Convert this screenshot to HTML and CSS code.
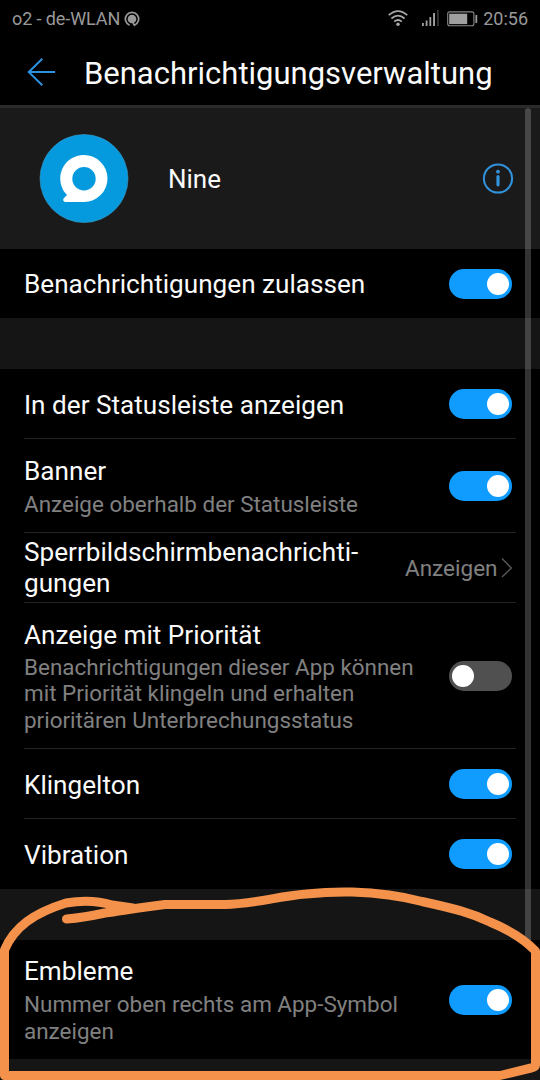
FILE: index.html
```html
<!DOCTYPE html>
<html lang="de">
<head>
<meta charset="utf-8">
<title>Benachrichtigungsverwaltung</title>
<link rel="stylesheet" href="styles.css">
</head>
<body>
<div class="screen">
  <div class="statusbar">
    <span class="carrier">o2 - de-WLAN</span>
    <svg class="ring" width="16" height="16" viewBox="0 0 16 16"><circle cx="8" cy="8" r="4.3" fill="#999"/><path d="M5.6 14.2A6.6 6.6 0 1 1 10.4 14.2L9 12" fill="none" stroke="#999" stroke-width="1.7"/></svg>
    <span class="spacer"></span>
    <svg class="wifi" width="20" height="17" viewBox="0 0 20 17" fill="none" stroke="#a8a8a8" stroke-width="1.7"><path d="M.7 5.2Q10-2.9 19.3 5.2M3.4 8.5Q10 2.8 16.6 8.5M6.2 11.7Q10 8.3 13.8 11.7"/><circle cx="10" cy="14.3" r="1.7" fill="#a8a8a8" stroke="none"/></svg>
    <svg class="signal" width="17" height="17" viewBox="0 0 17 17" fill="#a0a0a0"><path d="M0 14h1.8v3H0zM3.7 11.5h1.8V17H3.7zM7.4 8h1.8v9H7.4zM11.1 4h1.9v13h-1.9z"/><path d="M15 1h1.8v16H15z" fill="#333"/></svg>
    <svg class="battery" width="31" height="16" viewBox="0 0 31 16"><rect x=".7" y=".9" width="26.2" height="13.8" rx="2" fill="none" stroke="#888" stroke-width="1.1"/><path d="M2.2 2.7h18v10.4h-18z" fill="#a0a0a0"/><path d="M28.4 4h1.8v8h-1.8z" fill="#999"/></svg>
    <span class="clock">20:56</span>
  </div>
  <div class="titlebar">
    <svg class="back" width="30" height="30" viewBox="0 0 30 30" fill="none" stroke="#2c92e0" stroke-width="2"><path d="M15.300 1.800 1.800 15.100 15.300 28.300M1.800 15.100H28"/></svg>
    <h1 class="title">Benachrichtigungsverwaltung</h1>
  </div>
  <div class="content">
    <div class="app">
      <svg class="logo" width="90" height="90" viewBox="0 0 90 90"><circle cx="45" cy="44.500" r="44" fill="#0599de" stroke="#3d9cc8" stroke-width=".6"/><path fill="#fff" fill-rule="evenodd" d="M45 21A23.500 23.500 0 1 1 45 68H26Q23 67 24.800 64.300L28 61A23.500 23.500 0 0 1 45 21ZM45 33A11.700 11.700 0 1 0 45 56.400A11.700 11.700 0 1 0 45 33Z"/></svg>
      <span class="appname">Nine</span>
      <svg class="info" width="32" height="32" viewBox="0 0 32 32"><circle cx="16" cy="15.500" r="14.1" fill="none" stroke="#3193dc" stroke-width="2"/><circle cx="16" cy="8.700" r="1.9" fill="#3193dc"/><path d="M16 13.700V21.800" stroke="#3193dc" stroke-width="3.2" stroke-linecap="round"/></svg>
    </div>
    <div class="row allow"><div class="label">Benachrichtigungen zulassen</div><div class="toggle"></div></div>
    <div class="gap"></div>
    <div class="row line"><div class="label">In der Statusleiste anzeigen</div><div class="toggle"></div></div>
    <div class="row line banner"><div class="label">Banner<div class="sub">Anzeige oberhalb der Statusleiste</div></div><div class="toggle"></div></div>
    <div class="row line lock"><div class="label">Sperrbildschirmbenachrichti-<br>gungen</div><div class="value">Anzeigen</div><svg class="chevron" width="12" height="22" viewBox="0 0 12 22" fill="none" stroke="#555" stroke-width="1.5"><path d="M1 1.5 10.3 11 1 20"/></svg></div>
    <div class="row line priority"><div class="label">Anzeige mit Priorität<div class="sub">Benachrichtigungen dieser App können<br>mit Priorität klingeln und erhalten<br>prioritären Unterbrechungsstatus</div></div><div class="toggle off"></div></div>
    <div class="row line"><div class="label">Klingelton</div><div class="toggle"></div></div>
    <div class="row"><div class="label">Vibration</div><div class="toggle"></div></div>
    <div class="gap"></div>
    <div class="row badge"><div class="label">Embleme<div class="sub">Nummer oben rechts am App-Symbol<br>anzeigen</div></div><div class="toggle"></div></div>
    <div class="gap last"></div>
  </div>
  <div class="scrollbar"></div>
  <svg class="marker" width="540" height="1080" viewBox="0 0 540 1080" fill="none" stroke="#f4924b" stroke-width="9" stroke-linecap="round" stroke-linejoin="round"><path d="M66.500 919Q84 917.500 105 913C126 910 145 907 165 904.500H225C255 904 279 896 306 894Q330 891.500 352 892C385 893 405 897 422 901.500C456 909 471 913 490 922C512 931 525 940 535.500 951V1065Q535.500 1067 531 1068L500 1075.500H4.500V950C14 927 34 913 66 903C83 900 99 901 112 905L133 908"/></svg>
</div>
</body>
</html>
```
FILE: styles.css
```css
* { box-sizing: border-box; }
body { margin: 0; background: #000; }
.screen { position: relative; width: 540px; height: 1080px; overflow: hidden; background: #000; color: #fafafa; font-family: Roboto, sans-serif; }
svg { display: block; flex: none; }
.statusbar { height: 38px; display: flex; align-items: center; padding: 0 12px; color: #999; font-size: 18px; line-height: 38px; white-space: nowrap; }
.carrier { letter-spacing: -.1px; }
.ring { margin-left: 4px; }
.spacer { flex: 1; }
.wifi { margin-bottom: 2px; }
.signal { margin: 0 0 4px 14px; }
.battery { margin-left: 8px; }
.clock { margin-left: 5px; }
.titlebar { height: 67px; display: flex; align-items: center; padding-left: 27px; }
.title { margin: 5px 0 0 27px; font-size: 31px; font-weight: 400; line-height: 40px; white-space: nowrap; }
.content { border-top: 3px solid #2a2a2a; }
.app { height: 141px; display: flex; align-items: center; padding: 0 26px 0 39px; background: #1a1a1a; }
.appname { flex: 1; margin-left: 39px; padding-top: 1px; font-size: 26px; }
.row { display: flex; align-items: center; height: 70px; margin: 0 24px; padding-right: 4.5px; }
.row.allow { height: 69px; }
.line { border-bottom: 1px solid #232323; }
.label { flex: 1; padding-top: 2px; font-size: 26.15px; line-height: 30px; white-space: nowrap; }
.allow .label { padding-top: 0; }
.lock .label { padding-top: 0; line-height: 30.5px; }
.sub { margin-top: 5px; color: #808080; font-size: 22.45px; line-height: 26.5px; }
.banner { height: 94px; }
.banner .label { padding-top: 3px; }
.row.priority { height: 146px; }
.priority .label { padding-top: 2px; }
.priority .sub { margin-top: 4px; }
.badge { height: 119px; }
.badge .label { padding-top: 1px; }
.toggle { flex: none; width: 63px; height: 30px; padding: 4px 3px; border-radius: 15px; background: #109bff; display: flex; justify-content: flex-end; }
.toggle::before { content: ""; width: 22px; height: 22px; border-radius: 50%; background: #fff; }
.toggle.off { background: #505050; justify-content: flex-start; }
.value { padding-top: 1px; color: #808080; font-size: 22.5px; }
.chevron { margin: 0 -1px 0 3px; }
.gap { height: 51px; background: #151515; }
.last { height: 21px; }
.scrollbar { position: absolute; top: 108px; left: 525px; width: 6px; height: 838px; border-radius: 3px; background: rgba(255, 255, 255, .2); }
.marker { position: absolute; left: 0; top: 0; }
```
